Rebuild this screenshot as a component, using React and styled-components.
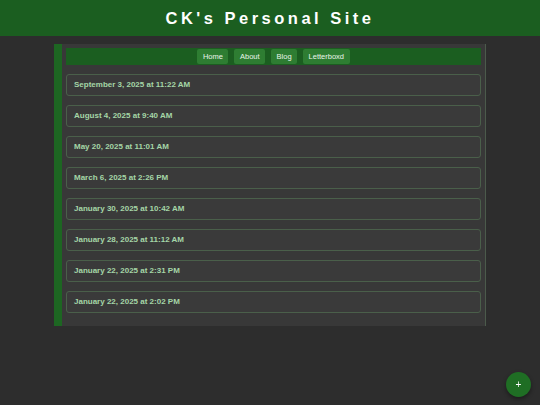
import React from "react";
import styled, { createGlobalStyle } from "styled-components";

const GlobalStyle = createGlobalStyle`
  body {
    margin: 0;
    padding: 0;
    background-color: #2d2d2d;
    font-family: "Liberation Sans", Arial, sans-serif;
    min-height: 100vh;
  }
`;

const Header = styled.header`
  height: 36px;
  background: #1b5e20;
  display: flex;
  align-items: center;
  justify-content: center;
`;

const Title = styled.h1`
  margin: 0;
  font-size: 16.5px;
  font-weight: bold;
  color: #ffffff;
  letter-spacing: 3.5px;
`;

const Container = styled.main`
  width: 80%;
  box-sizing: border-box;
  margin: 8px auto 0;
  padding: 4px;
  background: #383838;
  border-left: 8px solid #1d6622;
  border-right: 1px solid #4b5a4b;
`;

const Nav = styled.nav`
  display: flex;
  justify-content: center;
  align-items: center;
  gap: 6px;
  padding: 1px 0;
  background: #1b5e20;
  margin-bottom: 9px;
`;

const NavButton = styled.a`
  height: 15px;
  display: flex;
  align-items: center;
  padding: 0 5.5px;
  background: #2e7d32;
  color: #e8f5e9;
  font-size: 7.5px;
  border-radius: 2px;
  text-decoration: none;
  cursor: pointer;
`;

const Card = styled.div`
  border: 1px solid #4a5f4a;
  border-radius: 3px;
  background: #3a3a3a;
  padding: 5px 7px;
  margin-bottom: 9px;
`;

const DateText = styled.div`
  font-size: 8px;
  line-height: 10px;
  font-weight: bold;
  color: #a5d6a7;
`;

const Fab = styled.button`
  position: fixed;
  right: 9px;
  bottom: 8px;
  width: 25px;
  height: 25px;
  border-radius: 50%;
  border: none;
  background: #1f6e24;
  color: #ffffff;
  font-size: 10px;
  line-height: 1;
  display: flex;
  align-items: center;
  justify-content: center;
  box-shadow: 0 2px 4px rgba(0, 0, 0, 0.4);
  cursor: pointer;
  padding: 0;
`;

const links = ["Home", "About", "Blog", "Letterboxd"];

const posts = [
  "September 3, 2025 at 11:22 AM",
  "August 4, 2025 at 9:40 AM",
  "May 20, 2025 at 11:01 AM",
  "March 6, 2025 at 2:26 PM",
  "January 30, 2025 at 10:42 AM",
  "January 28, 2025 at 11:12 AM",
  "January 22, 2025 at 2:31 PM",
  "January 22, 2025 at 2:02 PM",
];

const App = () => (
  <>
    <GlobalStyle />
    <Header>
      <Title>CK's Personal Site</Title>
    </Header>
    <Container>
      <Nav>
        {links.map((l) => (
          <NavButton key={l}>{l}</NavButton>
        ))}
      </Nav>
      {posts.map((p, i) => (
        <Card key={i}>
          <DateText>{p}</DateText>
        </Card>
      ))}
    </Container>
    <Fab>+</Fab>
  </>
);

export default App;
